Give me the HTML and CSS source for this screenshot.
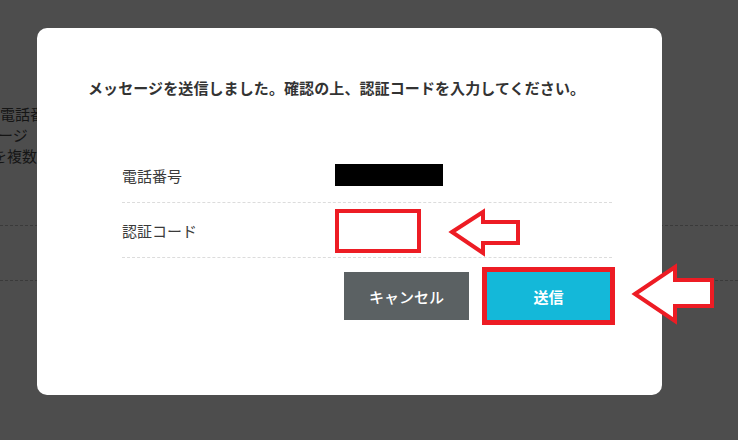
FILE: index.html
```html
<!DOCTYPE html>
<html lang="ja">
<head>
<meta charset="utf-8">
<title>認証コード</title>
<link rel="stylesheet" href="styles.css">
</head>
<body>
<div class="page">
  <div class="page-text">
    <p class="l1">電話番号</p>
    <p class="l2">ージ</p>
    <p class="l3">を複数</p>
  </div>
  <div class="page-row r1"></div>
  <div class="page-row r2"></div>
</div>

<div class="modal">
  <p class="modal-title">メッセージを送信しました。確認の上、認証コードを入力してください。</p>
  <div class="form">
    <div class="form-row">
      <div class="form-label">電話番号</div>
      <div class="form-value"><span class="masked"></span></div>
    </div>
    <div class="form-row">
      <div class="form-label">認証コード</div>
      <div class="form-value"><span class="code-box"></span></div>
    </div>
  </div>
  <div class="actions">
    <button class="btn btn-cancel" type="button">キャンセル</button>
    <button class="btn btn-submit" type="button">送信</button>
  </div>
</div>

<svg class="arrow arrow-code" width="80" height="54" viewBox="0 0 80 54">
  <polygon points="7,26 38,6 38,16 73,16 73,37 38,37 38,47" fill="#ffffff" stroke="#ed1c24" stroke-width="4" stroke-linejoin="miter"/>
</svg>
<svg class="arrow arrow-submit" width="90" height="68" viewBox="0 0 90 68">
  <polygon points="7,34 47,7 47,20 84,20 84,46 47,46 47,61" fill="#ffffff" stroke="#ed1c24" stroke-width="4" stroke-linejoin="miter"/>
</svg>
</body>
</html>
```

FILE: styles.css
```css
html, body {
  margin: 0;
  padding: 0;
}
body {
  width: 738px;
  height: 440px;
  overflow: hidden;
  background: #4d4d4d;
  font-family: "Noto Sans CJK JP", "Noto Sans", sans-serif;
  position: relative;
}

/* dimmed page behind the dialog */
.page {
  padding-top: 103px;
}
.page-text p {
  margin: 0;
  font-size: 15px;
  line-height: 21px;
  color: #151515;
  white-space: nowrap;
}
.page-text .l2 { text-indent: -2px; }
.page-text .l3 { text-indent: -8px; }
.page-row {
  border-bottom: 1px dashed #3a3a3a;
}
.page-row.r1 { height: 59px; }
.page-row.r2 { height: 54px; }

/* dialog */
.modal {
  position: absolute;
  left: 37px;
  top: 28px;
  width: 625px;
  height: 367px;
  background: #ffffff;
  border-radius: 10px;
  box-sizing: border-box;
  padding: 48px 50px 0 51px;
}
.modal-title {
  margin: 0;
  font-size: 15px;
  line-height: 24px;
  font-weight: 700;
  letter-spacing: 0.1px;
  color: #333333;
  white-space: nowrap;
}
.form {
  margin: 48px 0 0 34px;
}
.form-row {
  display: flex;
  align-items: center;
  height: 54px;
  border-bottom: 1px dashed #dcdcdc;
}
.form-label {
  width: 213px;
  font-size: 15px;
  color: #3a3a3a;
}
.form-value {
  display: flex;
  align-items: center;
}
.masked {
  display: block;
  width: 108px;
  height: 22px;
  background: #000000;
}
.code-box {
  display: block;
  width: 78px;
  height: 36px;
  border: 4px solid #ed1c24;
  margin-top: 2px;
}
.actions {
  display: flex;
  justify-content: flex-end;
  gap: 18px;
  margin-top: 14px;
  padding-right: 2px;
}
.btn {
  border: 0;
  margin: 0;
  height: 48px;
  font-family: inherit;
  font-size: 15px;
  color: #ffffff;
  cursor: pointer;
}
.btn-cancel {
  width: 125px;
  background: #5b6163;
  font-weight: 500;
}
.btn-submit {
  width: 123px;
  background: #14b8d9;
  font-weight: 700;
  outline: 5px solid #ed1c24;
}

/* annotation arrows */
.arrow {
  position: absolute;
}
.arrow-code {
  left: 445px;
  top: 206px;
}
.arrow-submit {
  left: 628px;
  top: 260px;
}
```
